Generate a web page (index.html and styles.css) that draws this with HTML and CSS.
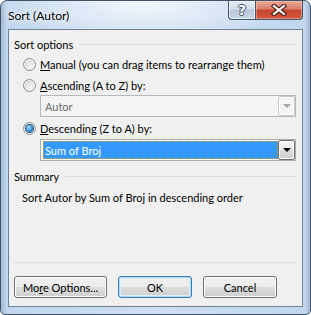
FILE: index.html
```html
<!DOCTYPE html>
<html lang="en">
<head>
    <meta charset="UTF-8">
    <title>Sort (Autor)</title>
    <link rel="stylesheet" href="styles.css">
</head>
<body>
    <div class="window">
        <div class="titlebar">
            <span class="title">Sort (Autor)</span>
            <div class="caption-buttons">
                <div class="cap-btn help">?</div>
                <div class="cap-btn close">
                    <svg width="16" height="12" viewBox="0 0 16 12">
                        <path d="M3 2 L13 10 M13 2 L3 10" stroke="#4a1c14" stroke-width="4.5" stroke-linecap="square"/>
                        <path d="M3 2 L13 10 M13 2 L3 10" stroke="#fff" stroke-width="2.2" stroke-linecap="square"/>
                    </svg>
                </div>
            </div>
        </div>

        <div class="client">
            <div class="group-head"><span>Sort options</span></div>

            <div class="radio-row first">
                <span class="radio"></span>
                <span><u>M</u>anual (you can drag items to rearrange them)</span>
            </div>
            <div class="radio-row">
                <span class="radio"></span>
                <span><u>A</u>scending (A to Z) by:</span>
            </div>
            <div class="combo disabled">
                <span class="combo-text">Autor</span>
                <span class="drop-btn"><span class="arrow"></span></span>
            </div>

            <div class="radio-row third">
                <span class="radio checked"></span>
                <span><u>D</u>escending (Z to A) by:</span>
            </div>
            <div class="combo focused">
                <span class="combo-text"><span class="selection">Sum of Broj</span></span>
                <span class="drop-btn"><span class="arrow"></span></span>
            </div>

            <div class="group-head summary-head"><span>Summary</span></div>
            <div class="summary-text">Sort Autor by Sum of Broj in descending order</div>

            <div class="footer">
                <div class="separator"></div>
                <div class="button-row">
                    <button class="btn wide">Mo<u>r</u>e Options...</button>
                    <button class="btn default">OK</button>
                    <button class="btn">Cancel</button>
                </div>
            </div>
        </div>
    </div>
</body>
</html>
```

FILE: styles.css
```css
:root {
    --dialog-bg: #f0f0f0;
    --text-color: #000;
    --rule-color: #d5dfe5;
    --frame-edge: #3f5268;
}

body {
    margin: 0;
    background: #ffffff;
    font-family: 'Lato', 'Noto Sans', sans-serif;
    font-size: 11px;
    color: var(--text-color);
}

.window {
    width: 311px;
    height: 315px;
    box-sizing: border-box;
    display: flex;
    flex-direction: column;
    border: 1px solid var(--frame-edge);
    border-radius: 7px 7px 5px 5px;
    overflow: hidden;
    background:
        radial-gradient(ellipse 150px 45px at 140px 0, rgba(255, 255, 255, 0.75), rgba(255, 255, 255, 0) 100%),
        linear-gradient(to right, #9fb9d6 0, #c2d7ee 6px, #cddff2 50%, #c2d7ee 304px, #9fb9d6 100%);
}

.titlebar {
    height: 28px;
    display: flex;
    align-items: flex-start;
    justify-content: space-between;
    padding: 0 7px 0 7px;
}

.title {
    margin-top: 7px;
    line-height: 16px;
    font-size: 12px;
    text-shadow: 0 0 6px rgba(255, 255, 255, 0.95), 0 0 3px rgba(255, 255, 255, 0.95);
}

.caption-buttons {
    display: flex;
    height: 19px;
}

.cap-btn {
    box-sizing: border-box;
    height: 19px;
    display: flex;
    align-items: center;
    justify-content: center;
    border: 1px solid #44556a;
    border-top: none;
}

.help {
    width: 27px;
    border-right: none;
    border-radius: 0 0 0 4px;
    background: linear-gradient(#e4ecf4 0, #d2dde9 45%, #b8c8da 50%, #c8d6e4 100%);
    box-shadow: inset 0 0 0 1px rgba(255, 255, 255, 0.5);
    font-family: 'DejaVu Sans', sans-serif;
    font-weight: bold;
    font-size: 14px;
    color: #fff;
    text-shadow: 1px 0 0 #3d4a5a, -1px 0 0 #3d4a5a, 0 1px 0 #3d4a5a, 0 -1px 0 #3d4a5a;
}

.close {
    width: 48px;
    border-radius: 0 0 4px 0;
    background: linear-gradient(#e9a896 0, #d98068 45%, #c8442d 50%, #d15a3f 100%);
    box-shadow: inset 0 0 0 1px rgba(255, 210, 200, 0.45);
}

.client {
    flex: 1;
    margin: 0 7px 7px 7px;
    display: flex;
    flex-direction: column;
    padding: 7px 6px 0 5px;
    background: var(--dialog-bg);
    border: 1px solid #6f8194;
}

.group-head {
    display: flex;
    align-items: center;
    gap: 6px;
    line-height: 15px;
}

.group-head::after {
    content: "";
    flex: 1;
    height: 1px;
    background: var(--rule-color);
}

.radio-row {
    display: flex;
    align-items: center;
    gap: 4px;
    height: 15px;
    line-height: 15px;
    padding-left: 9px;
    margin-top: 6px;
}

.radio-row.first {
    margin-top: 5px;
}

.radio-row.third {
    margin-top: 4px;
}

.radio {
    box-sizing: border-box;
    width: 13px;
    height: 13px;
    border-radius: 50%;
    border: 1px solid #8e8f8f;
    background: radial-gradient(circle at 60% 65%, #f6f6f6 0, #dcdcdc 60%, #c8c8c8 100%);
    box-shadow: inset 0 0 0 1px #f4f4f4;
    display: flex;
    align-items: center;
    justify-content: center;
}

.radio.checked::after {
    content: "";
    width: 7px;
    height: 7px;
    border-radius: 50%;
    background: radial-gradient(circle at 40% 35%, #b6e6ff 0, #3d9fe0 45%, #1a4f86 100%);
    box-shadow: 0 0 0 1px #1e4c7a;
}

.combo {
    box-sizing: border-box;
    height: 22px;
    margin: 2px 0 0 26px;
    display: flex;
    align-items: stretch;
    padding: 1px;
    border: 1px solid #a7aeb6;
    background: #fff;
}

.combo.disabled {
    border-color: #b5b9bd;
    background: #f4f4f4;
}

.combo.focused {
    margin-top: 3px;
}

.combo-text {
    flex: 1;
    display: flex;
    align-items: center;
    padding-left: 3px;
    line-height: 15px;
}

.disabled .combo-text {
    color: #6d6d6d;
}

.focused .combo-text {
    padding-left: 1px;
}

.selection {
    flex: 1;
    align-self: stretch;
    display: flex;
    align-items: center;
    padding-left: 1px;
    background: #3399ff;
    color: #fff;
    border: 1px dotted #f29a2e;
}

.drop-btn {
    box-sizing: border-box;
    width: 17px;
    margin: -1px -1px -1px 0;
    display: flex;
    align-items: center;
    justify-content: center;
    border: 1px solid #707070;
    border-radius: 2px;
    background: linear-gradient(#f4f4f4 0, #ebebeb 50%, #dddddd 50%, #cfcfcf 100%);
    box-shadow: inset 0 0 0 1px #fbfbfb;
}

.disabled .drop-btn {
    border-color: #c9c9c9;
    background: #f4f4f4;
}

.arrow {
    width: 0;
    height: 0;
    border-left: 4px solid transparent;
    border-right: 4px solid transparent;
    border-top: 4px solid #000;
}

.disabled .arrow {
    border-top-color: #a6a6a6;
}

.summary-head {
    margin-top: 8px;
}

.summary-text {
    margin: 6px 0 0 8px;
    line-height: 15px;
}

.footer {
    margin-top: auto;
    padding-bottom: 8px;
}

.separator {
    height: 1px;
    background: var(--rule-color);
    margin-bottom: 13px;
}

.button-row {
    display: flex;
    gap: 11px;
}

.btn {
    box-sizing: border-box;
    width: 74px;
    height: 22px;
    padding: 0;
    font-family: inherit;
    font-size: 11px;
    color: #000;
    border: 1px solid #707070;
    border-radius: 3px;
    background: linear-gradient(#f2f2f2 0, #ebebeb 50%, #dddddd 50%, #cfcfcf 100%);
    box-shadow: inset 0 0 0 1px #fcfcfc;
}

.btn.wide {
    width: 93px;
}

.btn.default {
    border-color: #3c7fb1;
    box-shadow: inset 0 0 0 1px #a9d9f3, inset 0 0 0 2px #dcf0fb;
}
```
